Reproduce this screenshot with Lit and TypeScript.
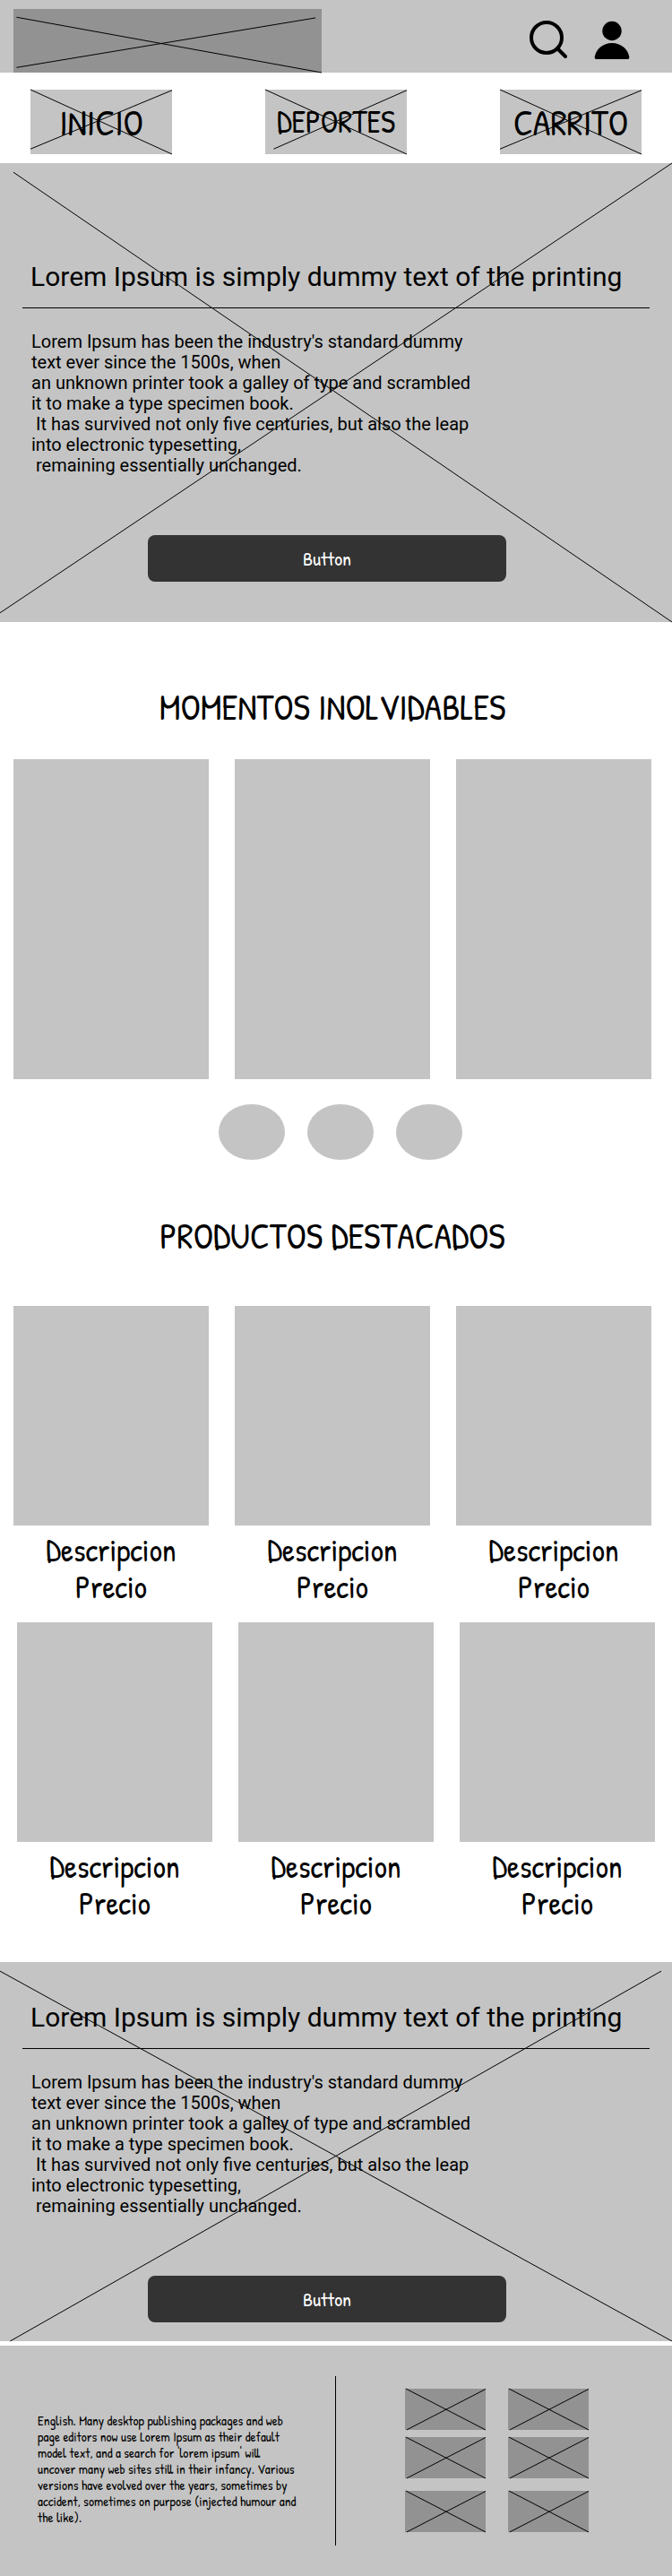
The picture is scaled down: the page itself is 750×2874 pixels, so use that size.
import { LitElement, html, css, svg } from "lit";
import { customElement, property } from "lit/decorators.js";

type Segment = [x1: number, y1: number, x2: number, y2: number];

const FULL_CROSS: Segment[] = [
  [0, 0, 100, 100],
  [0, 100, 100, 0],
];

const NAV: { label: string; small?: boolean; lines: Segment[] }[] = [
  { label: "INICIO", lines: [[0, 0, 100, 100], [0, 92, 100, 1]] },
  { label: "DEPORTES", small: true, lines: [[0, 0, 100, 100], [6, 92, 100, 1]] },
  { label: "CARRITO", lines: [[0, 0, 100, 100], [0, 92, 100, 1]] },
];

const BODY_TEXT = `Lorem Ipsum has been the industry's standard dummy
text ever since the 1500s, when
an unknown printer took a galley of type and scrambled
it to make a type specimen book.
 It has survived not only five centuries, but also the leap
into electronic typesetting,
 remaining essentially unchanged.`;

const FOOTER_TEXT = `English. Many desktop publishing packages and web
page editors now use Lorem Ipsum as their default
model text, and a search for 'lorem ipsum' will
uncover many web sites still in their infancy. Various
versions have evolved over the years, sometimes by
accident, sometimes on purpose (injected humour and
the like).`;

/** Thin diagonal strokes laid over a placeholder; coordinates are percentages. */
@customElement("wire-cross")
export class WireCross extends LitElement {
  @property({ attribute: false }) lines: Segment[] = FULL_CROSS;

  static styles = css`
    :host {
      position: absolute;
      inset: 0;
      pointer-events: none;
    }
    .strokes {
      display: block;
      width: 100%;
      height: 100%;
      overflow: visible;
      stroke: #000;
      stroke-width: 1;
    }
  `;

  render() {
    return html`<svg class="strokes" aria-hidden="true">
      ${this.lines.map(
        ([x1, y1, x2, y2]) =>
          svg`<line x1="${x1}%" y1="${y1}%" x2="${x2}%" y2="${y2}%"></line>`
      )}
    </svg>`;
  }
}

@customElement("hero-banner")
export class HeroBanner extends LitElement {
  @property({ attribute: false }) lines: Segment[] = FULL_CROSS;

  static styles = css`
    :host {
      display: block;
      position: relative;
      background: #c4c4c4;
      font-family: Roboto, sans-serif;
      color: #000;
    }
    .title {
      margin: 0;
      padding: 0 9px;
      font-size: 30px;
      line-height: 35px;
      font-weight: 400;
    }
    .rule {
      margin: 17px 0 26px;
      border: 0;
      border-top: 1px solid #000;
    }
    .text {
      margin: 0;
      padding: 0 10px;
      font-size: 20px;
      line-height: 23px;
      white-space: pre-wrap;
    }
    .action {
      display: block;
      width: 400px;
      max-width: 100%;
      height: 52px;
      margin: 66px 0 0 20%;
      border: 0;
      border-radius: 8px;
      background: #333;
      color: #fff;
      font-family: "Patrick Hand", "Liberation Sans Narrow", "Open Sans", sans-serif;
      font-size: 22px;
      cursor: pointer;
    }
  `;

  render() {
    return html`
      <h1 class="title">Lorem Ipsum is simply dummy text of the printing</h1>
      <hr class="rule" />
      <p class="text">${BODY_TEXT}</p>
      <button class="action" type="button">Button</button>
      <wire-cross .lines=${this.lines}></wire-cross>
    `;
  }
}

@customElement("app-root")
export class AppRoot extends LitElement {
  static styles = css`
    :host {
      display: block;
      background: #fff;
      color: #000;
      font-family: "Patrick Hand", "Liberation Sans Narrow", "Open Sans", sans-serif;
    }
    .header {
      display: flex;
      justify-content: space-between;
      padding: 10px 47px 0 15px;
      background: #c4c4c4;
    }
    .logo {
      position: relative;
      width: 50%;
      height: 71px;
      background: #929292;
    }
    .tools {
      display: flex;
      gap: 29px;
      padding-top: 12px;
    }
    .tool {
      padding: 0;
      border: 0;
      background: none;
      color: inherit;
      height: 44px;
      cursor: pointer;
    }
    .icon {
      display: block;
      height: 44px;
    }
    .nav {
      display: flex;
      justify-content: space-between;
      padding: 19px 34px 10px;
    }
    .nav-link {
      position: relative;
      display: flex;
      align-items: center;
      justify-content: center;
      width: 158px;
      height: 72px;
      background: #c4c4c4;
      color: #000;
      text-decoration: none;
      font-size: 40px;
      line-height: 48px;
    }
    .nav-link.small {
      font-size: 35px;
    }
    .hero-top {
      padding: 109px 25px 45px;
    }
    .hero-bottom {
      padding: 44px 25px 21px;
    }
    .section {
      padding: 0 23px 0 15px;
    }
    .section.first {
      padding-top: 70px;
    }
    .section.second {
      padding-top: 60px;
    }
    .heading {
      margin: 0 0 35px;
      font-size: 40px;
      line-height: 48px;
      font-weight: 400;
      text-align: center;
    }
    .second .heading {
      margin-bottom: 55px;
    }
    .row {
      display: grid;
      grid-template-columns: repeat(3, 1fr);
      gap: 29px;
    }
    .moment {
      height: 357px;
      background: #c4c4c4;
    }
    .dots {
      display: flex;
      justify-content: center;
      gap: 25px;
      padding: 28px 0 0 18px;
    }
    .dot {
      width: 74px;
      height: 62px;
      padding: 0;
      border: 0;
      border-radius: 50%;
      background: #c4c4c4;
      cursor: pointer;
    }
    .products {
      padding: 19px 19px 45px;
    }
    .photo {
      height: 245px;
      margin-bottom: 7px;
      background: #c4c4c4;
    }
    .caption {
      margin: 0;
      font-size: 35px;
      line-height: 41px;
      text-align: center;
      white-space: pre-line;
    }
    .footer {
      display: grid;
      grid-template-columns: 1fr 1fr;
      margin-top: 5px;
      padding: 34px 0;
      background: #c4c4c4;
    }
    .about {
      margin: 0;
      padding: 41px 0 22px 42px;
      border-right: 1px solid #000;
      font-size: 15px;
      line-height: 18px;
      white-space: pre-line;
    }
    .tiles {
      display: grid;
      grid-template-columns: 90px 90px;
      grid-template-rows: 54px 60px 46px;
      column-gap: 25px;
      padding: 14px 0 0 77px;
    }
    .tile {
      position: relative;
      height: 46px;
      background: #929292;
    }
  `;

  private renderProduct() {
    return html`<article>
      <div class="photo"></div>
      <p class="caption">${"Descripcion\nPrecio"}</p>
    </article>`;
  }

  render() {
    return html`
      <header class="header">
        <div class="logo">
          <wire-cross .lines=${[[1, 13, 100, 100], [1, 92, 98, 14]] as Segment[]}></wire-cross>
        </div>
        <div class="tools">
          <button class="tool" type="button" aria-label="Buscar">
            <svg class="icon" width="44" viewBox="0 0 44 44" fill="none" stroke="#000" stroke-width="4" stroke-linecap="round">
              <circle cx="20" cy="20" r="17"></circle>
              <path d="M32 32L41 41"></path>
            </svg>
          </button>
          <button class="tool" type="button" aria-label="Cuenta">
            <svg class="icon" width="40" viewBox="0 0 40 44">
              <circle cx="20" cy="12.5" r="10.7"></circle>
              <path d="M.7 41.5C2 33 10 26 20 26S38 33 39.3 41.5Q39.6 44 37.5 44H2.5Q.4 44 .7 41.5Z"></path>
            </svg>
          </button>
        </div>
      </header>

      <nav class="nav">
        ${NAV.map(
          (item) => html`<a class="nav-link ${item.small ? "small" : ""}" href="#">
            ${item.label}<wire-cross .lines=${item.lines}></wire-cross>
          </a>`
        )}
      </nav>

      <hero-banner
        class="hero-top"
        .lines=${[[2, 2, 100, 100], [0, 98, 100, 0]] as Segment[]}
      ></hero-banner>

      <section class="section first">
        <h2 class="heading">MOMENTOS INOLVIDABLES</h2>
        <div class="row">
          ${[0, 1, 2].map(() => html`<div class="moment"></div>`)}
        </div>
        <div class="dots">
          ${[1, 2, 3].map(
            (n) => html`<button class="dot" type="button" aria-label="Momento ${n}"></button>`
          )}
        </div>
      </section>

      <section class="section second">
        <h2 class="heading">PRODUCTOS DESTACADOS</h2>
        <div class="row">${[0, 1, 2].map(() => this.renderProduct())}</div>
      </section>
      <div class="row products">${[0, 1, 2].map(() => this.renderProduct())}</div>

      <hero-banner
        class="hero-bottom"
        .lines=${[[0, 2.4, 100, 100], [1.5, 100, 98.4, 2.4]] as Segment[]}
      ></hero-banner>

      <footer class="footer">
        <p class="about">${FOOTER_TEXT}</p>
        <div class="tiles">
          ${[0, 1, 2, 3, 4, 5].map(
            () => html`<div class="tile">
              <wire-cross .lines=${[[1, 0, 100, 100], [2, 100, 100, 1]] as Segment[]}></wire-cross>
            </div>`
          )}
        </div>
      </footer>
    `;
  }
}
